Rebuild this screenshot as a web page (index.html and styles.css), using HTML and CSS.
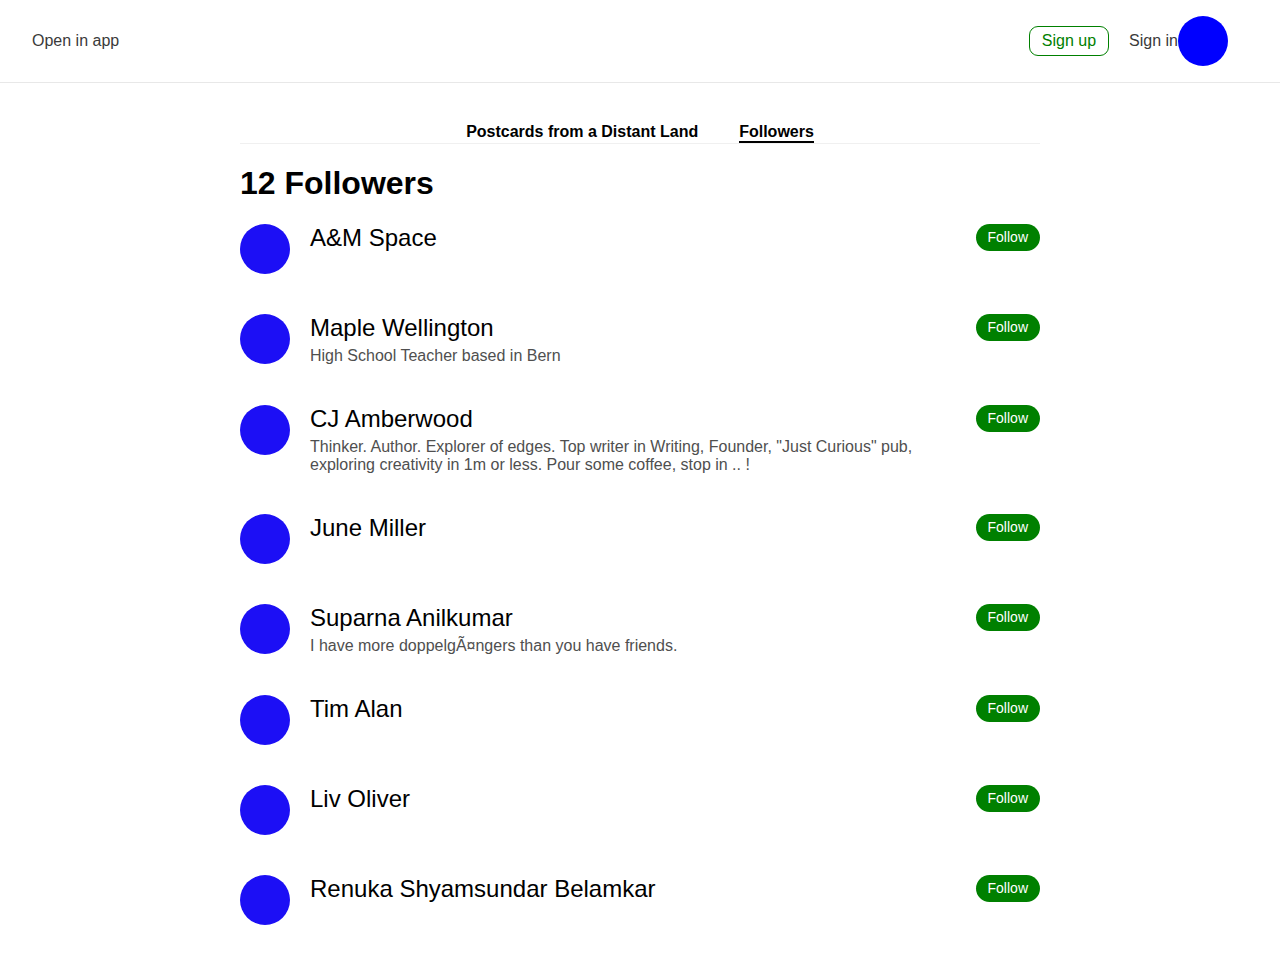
FILE: index.html
```html
<!DOCTYPE html>
<html lang="en">
<head>
<meta charset="utf-8">
<title>Followers – Postcards from a Distant Land</title>
<link rel="stylesheet" href="styles.css">
</head>
<body>
<header class="topbar">
  <a class="open-app" href="#">Open in app</a>
  <div class="topbar-right">
    <a class="signup" href="#">Sign up</a>
    <a class="signin" href="#">Sign in</a>
    <span class="user-dot"></span>
  </div>
</header>
<main class="main">
  <nav class="tabs">
    <a class="tab" href="#">Postcards from a Distant Land</a>
    <a class="tab tab-active" href="#">Followers</a>
  </nav>
  <h1 class="title">12 Followers</h1>
  <ul class="list">
    <li class="row">
      <span class="avatar"></span>
      <div class="info"><div class="name">A&amp;M Space</div></div>
      <button class="follow">Follow</button>
    </li>
    <li class="row">
      <span class="avatar"></span>
      <div class="info"><div class="name">Maple Wellington</div><div class="bio">High School Teacher based in Bern</div></div>
      <button class="follow">Follow</button>
    </li>
    <li class="row">
      <span class="avatar"></span>
      <div class="info"><div class="name">CJ Amberwood</div><div class="bio">Thinker. Author. Explorer of edges. Top writer in Writing, Founder, "Just Curious" pub, exploring creativity in 1m or less. Pour some coffee, stop in .. !</div></div>
      <button class="follow">Follow</button>
    </li>
    <li class="row">
      <span class="avatar"></span>
      <div class="info"><div class="name">June Miller</div></div>
      <button class="follow">Follow</button>
    </li>
    <li class="row">
      <span class="avatar"></span>
      <div class="info"><div class="name">Suparna Anilkumar</div><div class="bio">I have more doppelgÃ¤ngers than you have friends.</div></div>
      <button class="follow">Follow</button>
    </li>
    <li class="row">
      <span class="avatar"></span>
      <div class="info"><div class="name">Tim Alan</div></div>
      <button class="follow">Follow</button>
    </li>
    <li class="row">
      <span class="avatar"></span>
      <div class="info"><div class="name">Liv Oliver</div></div>
      <button class="follow">Follow</button>
    </li>
    <li class="row">
      <span class="avatar"></span>
      <div class="info"><div class="name">Renuka Shyamsundar Belamkar</div></div>
      <button class="follow">Follow</button>
    </li>
  </ul>
</main>
</body>
</html>
```
FILE: styles.css
```css
* { box-sizing: border-box; }
html, body { margin: 0; padding: 0; background: #fff; }
body {
  font-family: "Liberation Sans", Arial, sans-serif;
  color: #000;
}
a { text-decoration: none; }

.topbar {
  display: flex;
  align-items: center;
  justify-content: space-between;
  padding: 16px 52px 16px 32px;
  border-bottom: 1px solid #e8e8e8;
}
.open-app {
  font-size: 16px;
  color: #3a3a3a;
}
.topbar-right {
  display: flex;
  align-items: center;
}
.signup {
  font-size: 16px;
  line-height: 18px;
  color: #008000;
  border: 1px solid #008000;
  border-radius: 9px;
  padding: 5px 12px;
  margin-right: 20px;
}
.signin {
  font-size: 16px;
  color: #3a3a3a;
}
.user-dot {
  width: 50px;
  height: 50px;
  border-radius: 50%;
  background: #0000ff;
  display: block;
}

.main {
  width: 800px;
  margin: 0 auto;
  padding-top: 39px;
}
.tabs {
  display: flex;
  justify-content: center;
  gap: 41px;
  border-bottom: 1px solid #f0f0f0;
}
.tab {
  font-size: 16px;
  font-weight: bold;
  line-height: 19px;
  color: #000;
  border-bottom: 2px solid transparent;
}
.tab-active {
  border-bottom-color: #000;
}
.title {
  font-size: 32px;
  font-weight: bold;
  line-height: normal;
  margin: 21px 0 22px;
}
.list {
  list-style: none;
  margin: 0;
  padding: 0;
}
.row {
  display: flex;
  align-items: flex-start;
  gap: 20px;
  margin-bottom: 40px;
}
.avatar {
  flex: none;
  width: 50px;
  height: 50px;
  border-radius: 50%;
  background: #1c0ff5;
}
.info {
  flex: 1;
  min-width: 0;
}
.name {
  font-size: 24px;
  line-height: 28px;
  color: #000;
}
.bio {
  font-size: 16px;
  line-height: 18px;
  margin-top: 5px;
  color: #4f4f4f;
}
.follow {
  flex: none;
  font-family: "Liberation Sans", Arial, sans-serif;
  font-size: 14px;
  line-height: 19px;
  color: #fff;
  background: #008000;
  border: none;
  border-radius: 14px;
  padding: 4px 12px;
  margin: 0;
}
```
